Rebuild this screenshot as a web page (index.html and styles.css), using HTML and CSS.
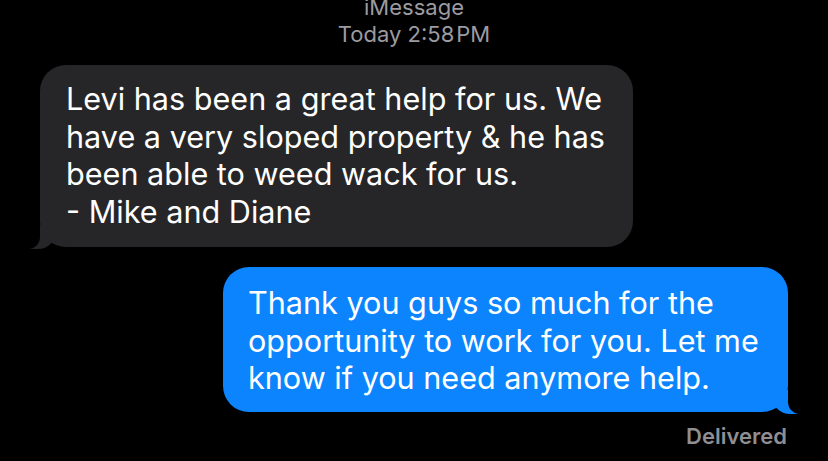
FILE: index.html
```html
<!DOCTYPE html>
<html lang="en">
<head>
    <meta charset="UTF-8">
    <meta name="viewport" content="width=device-width, initial-scale=1.0">
    <title>iMessage</title>
    <link rel="stylesheet" href="styles.css">
</head>
<body>
    <div class="thread">
        <div class="thread-header">
            <div class="service">iMessage</div>
            <div class="timestamp">Today 2:58&#8202;PM</div>
        </div>

        <div class="bubble incoming">
            Levi has been a great help for us. We<br>
            have a very sloped property &amp; he has<br>
            been able to weed wack for us.<br>
            - Mike and Diane
        </div>

        <div class="bubble outgoing">
            Thank you guys so much for the<br>
            opportunity to work for you. Let me<br>
            know if you need anymore help.
        </div>

        <div class="status">Delivered</div>
    </div>
</body>
</html>
```

FILE: styles.css
```css
body {
    margin: 0;
    background-color: #000;
    font-family: Inter, "Noto Sans", sans-serif;
    color: #fff;
    overflow: hidden;
}
.thread {
    display: flex;
    flex-direction: column;
    padding: 0 40px;
}
.thread-header {
    margin-top: -6px;
    margin-bottom: 17px;
    text-align: center;
    color: #9b9ba0;
    font-size: 22px;
    line-height: 27px;
}
.bubble {
    position: relative;
    font-size: 30.6px;
    line-height: 37.5px;
    border-radius: 26px;
}
.incoming {
    align-self: flex-start;
    box-sizing: border-box;
    width: 593px;
    padding: 15px 20px 17px 26px;
    background-color: #262628;
}
.outgoing {
    align-self: flex-end;
    box-sizing: border-box;
    width: 565px;
    margin-top: 20px;
    padding: 17px 20px 15px 25px;
    background-color: #0b84fe;
}
/* bubble tails */
.bubble::before,
.bubble::after {
    content: "";
    position: absolute;
    bottom: -2px;
    height: 24px;
}
.incoming::before {
    left: -10px;
    width: 26px;
    background-color: #262628;
    border-bottom-right-radius: 18px;
}
.incoming::after {
    left: -20px;
    width: 20px;
    background-color: #000;
    border-bottom-right-radius: 12px;
}
.outgoing::before {
    right: -10px;
    width: 26px;
    background-color: #0b84fe;
    border-bottom-left-radius: 18px;
}
.outgoing::after {
    right: -20px;
    width: 20px;
    background-color: #000;
    border-bottom-left-radius: 12px;
}
.status {
    align-self: flex-end;
    margin-top: 11px;
    margin-right: 1px;
    color: #8e8e93;
    font-size: 22px;
    font-weight: 600;
}
```
